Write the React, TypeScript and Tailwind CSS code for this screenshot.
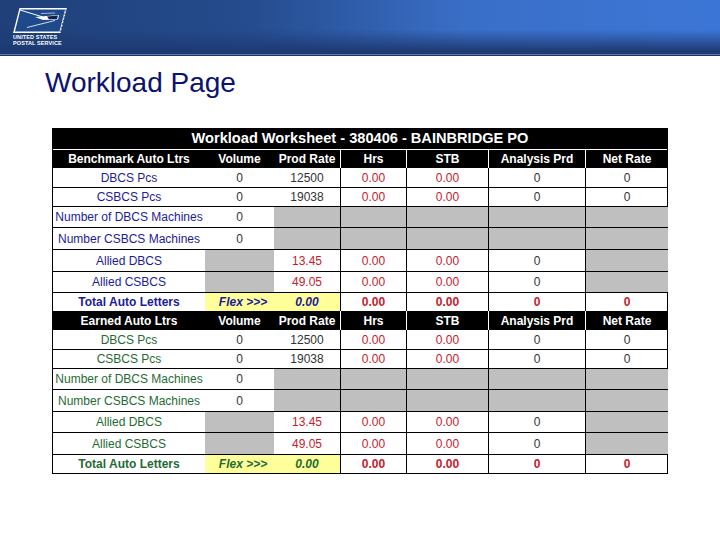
import clsx from "clsx";

type Cell = { text?: string; tone?: "gray" | "yellow"; color?: string; bold?: boolean; italic?: boolean; nudge?: boolean };

const COLS = "grid grid-cols-[152px_69px_67px_66px_82px_97px_82px]";
const RED = "text-[#c4202e]";
const DARK = "text-[#333333]";

// columns from Prod Rate onward have a rule on their right edge
function ruleAfter(i: number) {
  return i >= 2 && i <= 5;
}

function Section({
  title,
  labelColor,
  headHeight,
  alliedHeights,
}: {
  title: string;
  labelColor: string;
  headHeight: string;
  alliedHeights: [string, string];
}) {
  const red = (text: string): Cell => ({ text, color: RED });
  const num = (text: string): Cell => ({ text, color: DARK });
  const gray: Cell = { tone: "gray" };
  const label = (text: string): Cell => ({ text, color: labelColor });

  const rows: { h: string; cells: Cell[] }[] = [
    { h: "h-[20px]", cells: [label("DBCS Pcs"), num("0"), num("12500"), red("0.00"), red("0.00"), num("0"), num("0")] },
    { h: "h-[19px]", cells: [label("CSBCS Pcs"), num("0"), num("19038"), red("0.00"), red("0.00"), num("0"), num("0")] },
    { h: "h-[21px]", cells: [label("Number of DBCS Machines"), num("0"), gray, gray, gray, gray, gray] },
    { h: "h-[22px]", cells: [label("Number CSBCS Machines"), num("0"), gray, gray, gray, gray, gray] },
    { h: alliedHeights[0], cells: [label("Allied DBCS"), gray, red("13.45"), red("0.00"), red("0.00"), num("0"), gray] },
    { h: alliedHeights[1], cells: [label("Allied CSBCS"), gray, red("49.05"), red("0.00"), red("0.00"), num("0"), gray] },
  ];

  const heads = [title, "Volume", "Prod Rate", "Hrs", "STB", "Analysis Prd", "Net Rate"];
  const total: Cell[] = [
    { text: "Total Auto Letters", color: labelColor, bold: true },
    { text: "Flex >>>", color: labelColor, bold: true, italic: true, tone: "yellow", nudge: true },
    { text: "0.00", color: labelColor, bold: true, italic: true, tone: "yellow" },
    { text: "0.00", color: RED, bold: true },
    { text: "0.00", color: RED, bold: true },
    { text: "0", color: RED, bold: true },
    { text: "0", color: RED, bold: true },
  ];

  return (
    <>
      <div className={clsx(COLS, headHeight, "bg-black text-white font-bold text-[12px]")}>
        {heads.map((h, i) => (
          <div key={h} className={clsx("flex items-center justify-center", ruleAfter(i) && "border-r border-white")}>
            {h}
          </div>
        ))}
      </div>
      {rows.map((r) => (
        <div key={r.cells[0].text} className={clsx(COLS, r.h, "border-b border-black")}>
          {r.cells.map((c, i) => (
            <div
              key={i}
              className={clsx(
                "flex items-center justify-center whitespace-nowrap text-[12px]",
                c.tone === "gray" && "bg-[#bfbfbf]",
                c.color,
                ruleAfter(i) && "border-r border-black",
              )}
            >
              {c.text}
            </div>
          ))}
        </div>
      ))}
      <div className={clsx(COLS, "h-[18px]")}>
        {total.map((c, i) => (
          <div
            key={i}
            className={clsx(
              "flex items-center justify-center whitespace-nowrap text-[12px] font-bold",
              c.italic && "italic",
              c.tone === "yellow" && "bg-[#ffff99]",
              c.nudge && "pl-[7px]",
              c.color,
              ruleAfter(i) && "border-r border-black",
            )}
          >
            {c.text}
          </div>
        ))}
      </div>
    </>
  );
}

function Logo() {
  return (
    <div className="flex flex-col items-start w-[50px]">
      <svg width="54" height="25" viewBox="0 0 54 25">
        <path d="M7 .7H53L47 24.3H1Z" fill="#1e4a8c" stroke="#ffffff" strokeWidth="1.4" />
        <path d="M53 1.5L47.5 24" stroke="#0b1a40" strokeWidth="0.7" strokeDasharray="2 1.5" fill="none" />
        <path d="M7 2L30 9" stroke="#ffffff" strokeWidth="1" fill="none" />
        <path d="M22 9L46 7L45 11.5L30 12Z" fill="#ffffff" />
        <path d="M34 8.4L45 7.6L44 11L36 11.3Z" fill="#10214f" />
        <path d="M14 19.5L42 12.5" stroke="#ffffff" strokeWidth="0.8" fill="none" />
        <path d="M28 5.5L42 5" stroke="#ffffff" strokeWidth="0.6" fill="none" />
      </svg>
      <div className="mt-[1px] text-white font-bold text-[5.5px] leading-[6px] whitespace-nowrap tracking-[0.1px]">
        <div>UNITED STATES</div>
        <div>POSTAL SERVICE</div>
      </div>
    </div>
  );
}

export default function App() {
  return (
    <div className="w-[720px] h-[540px] bg-white overflow-hidden font-['Liberation_Sans',Arial,sans-serif]">
      <header>
        <div className="h-[54px] flex items-start pl-[13px] pt-[8px] bg-[linear-gradient(180deg,rgba(30,58,115,0)_55%,rgba(30,58,115,1)_95%),linear-gradient(90deg,#1f3f78_0%,#254c8e_35%,#3a6fc8_65%,#3c76d6_100%)]">
          <Logo />
        </div>
        <div className="h-px bg-[#5f78ad]" />
        <div className="h-px bg-[#1d3560]" />
      </header>
      <h1 className="ml-[45px] mt-[12px] text-[28px] leading-[30px] text-[#0b1270]">Workload Page</h1>
      <div className="ml-[52px] mt-[30px] w-[616px] border-x border-b border-black">
        <div className="h-[22px] bg-black text-white font-bold text-[14.6px] leading-[21px] text-center border-b border-white">
          Workload Worksheet - 380406 - BAINBRIDGE PO
        </div>
        <Section
          title="Benchmark Auto Ltrs"
          labelColor="text-[#1c1c96]"
          headHeight="h-[18px]"
          alliedHeights={["h-[22px]", "h-[21px]"]}
        />
        <Section
          title="Earned Auto Ltrs"
          labelColor="text-[#1f6b33]"
          headHeight="h-[19px]"
          alliedHeights={["h-[21px]", "h-[22px]"]}
        />
      </div>
    </div>
  );
}
